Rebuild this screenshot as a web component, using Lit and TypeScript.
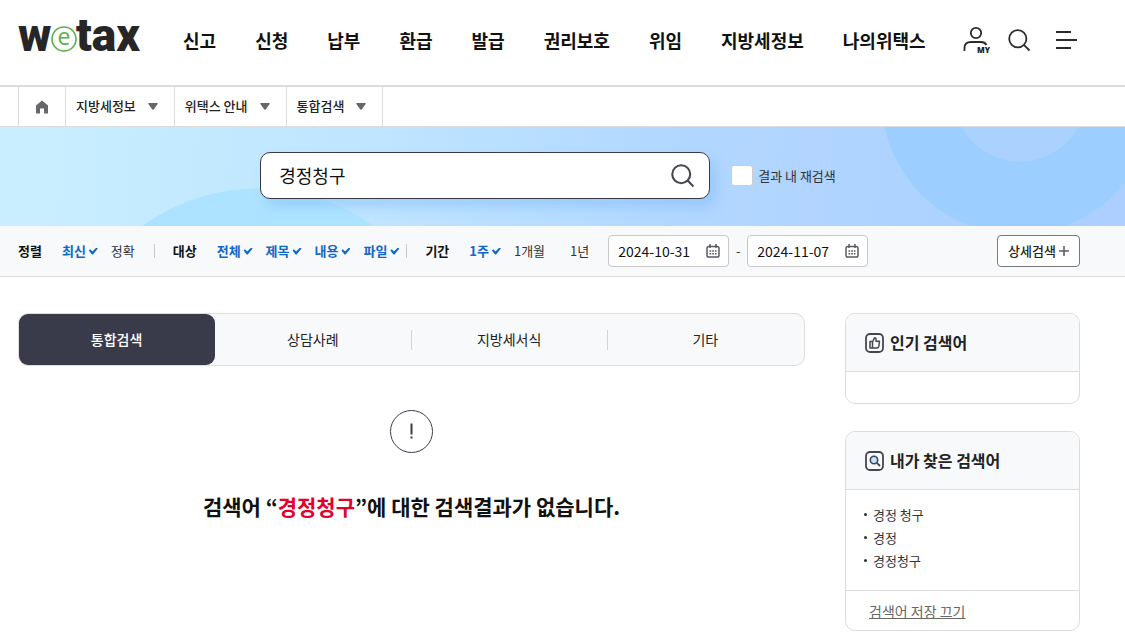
import { LitElement, html, css, svg } from "lit";
import { customElement, property, state } from "lit/decorators.js";
import { classMap } from "lit/directives/class-map.js";

const magnifier = svg`<circle cx="9.8" cy="9.8" r="8.6" /><path d="M15.9 15.9 L21.5 21.5" />`;

@customElement("site-header")
class SiteHeader extends LitElement {
  static styles = css`
    :host { display: block; border-bottom: 2px solid #dcdcdc; }
    .bar { display: flex; align-items: center; height: 85px; padding: 0 48px 5px 18px; box-sizing: border-box; }
    .logo svg { display: block; }
    .word { font: 900 46px Roboto, sans-serif; fill: #262626; }
    .letter { font: 400 23px "Open Sans", sans-serif; fill: #5cb143; }
    nav { display: flex; gap: 39px; margin-left: 33px; padding-bottom: 1px; }
    a { color: #111; text-decoration: none; white-space: nowrap; }
    nav a { font-size: 18px; line-height: 26px; font-weight: 700; }
    .tools { display: flex; align-items: center; margin-left: auto; gap: 18px; }
    button { display: block; border: 0; padding: 0; background: none; color: #2b2b2b; cursor: pointer; }
    button svg { display: block; fill: none; stroke: currentColor; stroke-width: 1.8; }
    .my { font: 800 8px "Open Sans", sans-serif; fill: #222; stroke: none; }
    .menu { margin-left: 6px; }
  `;
  private items = ["신고", "신청", "납부", "환급", "발급", "권리보호", "위임", "지방세정보", "나의위택스"];
  render() {
    return html`<header class="bar">
      <a class="logo" href="#" aria-label="wetax">
        <svg width="132" height="64" viewBox="0 0 132 64">
          <text class="word" x="0" y="43">w</text>
          <text class="word" x="58" y="43">tax</text>
          <circle cx="46" cy="31" r="12" fill="#fff" stroke="#5cb143" stroke-width="1.6" />
          <text class="letter" x="46" y="37" text-anchor="middle">e</text>
        </svg>
      </a>
      <nav>${this.items.map((t) => html`<a href="#">${t}</a>`)}</nav>
      <div class="tools">
        <button aria-label="MY">
          <svg width="27" height="28" viewBox="0 0 27 28">
            <circle cx="13" cy="7" r="5.2" />
            <path d="M1.5 25 V22 Q1.5 16 8 16 H18 Q22 16 23.5 19" />
            <text class="my" x="14" y="27">MY</text>
          </svg>
        </button>
        <button aria-label="검색">
          <svg width="23" height="23" viewBox="0 0 23 23">${magnifier}</svg>
        </button>
        <button class="menu" aria-label="전체메뉴">
          <svg width="22" height="20" viewBox="0 0 22 20"><path d="M1 2 H16 M1 10 H22 M1 18 H16" /></svg>
        </button>
      </div>
    </header>`;
  }
}

@customElement("bread-crumb")
class BreadCrumb extends LitElement {
  static styles = css`
    :host { display: block; border-bottom: 1px solid #dcdcdc; padding-left: 18px; }
    nav { display: flex; height: 39px; }
    a, button { display: flex; align-items: center; border: 0 solid #dcdcdc; border-right-width: 1px; box-sizing: border-box; background: none; }
    a { width: 48px; border-left-width: 1px; justify-content: center; }
    button { padding: 0 16px 0 10px; gap: 12px; font: inherit; font-size: 13px; font-weight: 500; color: #222; white-space: nowrap; cursor: pointer; }
    span { padding-bottom: 2px; }
    svg { display: block; fill: #66666b; }
  `;
  render() {
    return html`<nav>
      <a href="#" aria-label="홈"><svg width="14" height="14" viewBox="0 0 14 14"><path d="M7 0.5 L13 5.5 V13.5 H9 V8.5 H5 V13.5 H1 V5.5 Z" /></svg></a>
      ${["지방세정보", "위택스 안내", "통합검색"].map(
        (t) => html`<button><span>${t}</span><svg width="10" height="7" viewBox="0 0 10 7"><path d="M1 0 H9 Q10.4 0 9.5 1.2 L5.7 6.4 Q5 7.2 4.3 6.4 L0.5 1.2 Q-0.4 0 1 0 Z" /></svg></button>`
      )}
    </nav>`;
  }
}

@customElement("search-banner")
class SearchBanner extends LitElement {
  static styles = css`
    :host {
      display: block;
      background:
        radial-gradient(circle at calc(100% - 105px) -32px, #abd1ff 66px, transparent 67px),
        radial-gradient(circle at calc(100% - 107px) -29px, #9ccfff 136px, transparent 137px),
        radial-gradient(circle at 258px 259px, #aee3ff 197px, transparent 198px),
        linear-gradient(95deg, #c9efff, #bfe5ff 33%, #b2d7ff 60%, #accfff);
    }
    form { display: flex; align-items: center; justify-content: center; height: 99px; padding: 0 47px 2px 18px; box-sizing: border-box; }
    .box { display: flex; align-items: center; width: 450px; height: 47px; box-sizing: border-box; padding: 0 14px 0 18px; border: 1px solid #3a3a46; border-radius: 10px; background: #fff; box-shadow: 6px 8px 12px rgba(110, 175, 250, 0.35); }
    .query { flex: 1; min-width: 0; border: 0; padding: 0 0 2px; outline: 0; background: none; font: inherit; font-size: 18px; color: #111; }
    button { border: 0; padding: 0; background: none; color: #46464f; cursor: pointer; }
    button svg { display: block; fill: none; stroke: currentColor; stroke-width: 2; }
    .again { display: flex; align-items: center; gap: 5px; margin-left: 21px; font-size: 13px; color: #333; white-space: nowrap; }
    .tick { appearance: none; width: 22px; height: 21px; margin: 0; border: 1px solid #ccc; border-radius: 3px; background: #fff; }
    .tick:checked { background: #0f67c9; }
  `;
  render() {
    return html`<form @submit=${(e: Event) => e.preventDefault()}>
      <div class="box">
        <input class="query" type="text" aria-label="검색어" .value=${"경정청구"} />
        <button aria-label="검색"><svg width="24" height="24" viewBox="0 0 23 23">${magnifier}</svg></button>
      </div>
      <label class="again"><input class="tick" type="checkbox" />결과 내 재검색</label>
    </form>`;
  }
}

@customElement("filter-bar")
class FilterBar extends LitElement {
  static styles = css`
    :host { display: block; background: #f7f9fb; border-bottom: 1px solid #dcdcdc; }
    .bar { display: flex; align-items: center; min-height: 50px; padding: 0 45px 0 18px; font-size: 13px; line-height: 20px; color: #333; white-space: nowrap; }
    fieldset { display: contents; }
    .name { margin-right: 20px; font-weight: 700; color: #111; }
    .options { display: flex; gap: 13px; padding-right: 7px; }
    .split { width: 1px; height: 14px; margin-right: 18px; background: #c8c8c8; }
    .option { display: flex; align-items: center; }
    .option input { appearance: none; width: 9px; height: 7px; margin: 0 0 0 3px; }
    .option input:checked { background: #0f67c9; clip-path: polygon(0 44%, 15% 26%, 40% 58%, 84% 0, 100% 16%, 46% 100%, 34% 100%); }
    .option.on { font-weight: 700; color: #0f67c9; }
    .date { display: flex; align-items: center; width: 121px; height: 32px; box-sizing: border-box; padding: 0 8px 0 9px; border: 1px solid #c8c8c8; border-radius: 4px; background: #fff; }
    .date input { flex: 1; min-width: 0; width: 0; border: 0; padding: 0; outline: 0; background: none; font: inherit; font-size: 14px; color: #111; }
    button { font: inherit; cursor: pointer; }
    .pick { border: 0; padding: 0; background: none; }
    svg { display: block; fill: none; stroke: #5a5a62; stroke-width: 1.5; }
    .dash { width: 18px; text-align: center; }
    .more { display: flex; align-items: center; justify-content: center; gap: 3px; margin-left: auto; width: 83px; height: 32px; padding: 0; box-sizing: border-box; border: 1px solid #77777c; border-radius: 4px; background: #fff; font-weight: 500; color: #222; }
  `;
  @state() private picked = new Set(["최신", "전체", "제목", "내용", "파일", "1주"]);
  private toggle(kind: string, t: string, all: string[]) {
    const next = new Set(this.picked);
    if (kind === "radio") all.forEach((o) => next.delete(o));
    if (next.has(t)) next.delete(t);
    else next.add(t);
    this.picked = next;
  }
  private group(name: string, kind: string, options: string[]) {
    return html`<fieldset aria-label=${name}>
      <span class="name">${name}</span>
      <div class="options">
        ${options.map(
          (t) => html`<label class=${classMap({ option: true, on: this.picked.has(t) })}>${t}<input
            type=${kind} name=${name} .checked=${this.picked.has(t)} @change=${() => this.toggle(kind, t, options)} /></label>`
        )}
      </div>
    </fieldset>`;
  }
  private date(label: string, value: string) {
    return html`<div class="date">
      <input type="text" aria-label=${label} .value=${value} />
      <button class="pick" aria-label="달력">
        <svg width="14" height="14" viewBox="0 0 14 14"><rect x="1" y="2.5" width="12" height="10.5" rx="1.8" /><path d="M4 0 V4 M10 0 V4" /><path d="M3.5 7 H10.5 M3.5 9.8 H10.5" stroke-dasharray="1.7 1" /></svg>
      </button>
    </div>`;
  }
  render() {
    return html`<div class="bar">
      ${this.group("정렬", "radio", ["최신", "정확"])}
      <span class="split"></span>
      ${this.group("대상", "checkbox", ["전체", "제목", "내용", "파일"])}
      <span class="split"></span>
      ${this.group("기간", "radio", ["1주", "1개월", "1년"])}
      ${this.date("시작일", "2024-10-31")}
      <span class="dash">-</span>
      ${this.date("종료일", "2024-11-07")}
      <button class="more">상세검색<svg width="10" height="10" viewBox="0 0 10 10"><path d="M5 0 V10 M0 5 H10" /></svg></button>
    </div>`;
  }
}

@customElement("result-panel")
class ResultPanel extends LitElement {
  static styles = css`
    :host { display: block; }
    .tabs { display: grid; grid-template-columns: repeat(4, 1fr); border: 1px solid #dcdcdc; border-radius: 10px; background: #f7f9fb; }
    .tab { display: flex; align-items: center; height: 51px; padding: 0; border: 0; background: none; font: inherit; font-size: 14px; color: #222; cursor: pointer; }
    .tab span { flex: 1; line-height: 18px; padding-bottom: 2px; border-right: 1px solid transparent; }
    .tab.ruled span { border-right-color: #d4d4d4; }
    .tab.on { border-radius: 9px; background: #3a3b4a; color: #fff; font-weight: 500; }
    .empty { display: flex; flex-direction: column; align-items: center; padding-top: 44px; }
    .empty svg { display: block; fill: none; stroke: #3a3b4a; }
    p { margin: 37px 0 0; font-size: 21px; line-height: 32px; font-weight: 700; color: #111; text-align: center; }
    em { font-style: normal; color: #e4002b; }
  `;
  @state() private current = 0;
  render() {
    const tabs = ["통합검색", "상담사례", "지방세서식", "기타"];
    return html`<div class="tabs" role="tablist">
        ${tabs.map(
          (t, i) => html`<button role="tab" aria-selected=${i === this.current}
            class=${classMap({ tab: true, on: i === this.current, ruled: i > 0 && i < tabs.length - 1 })}
            @click=${() => (this.current = i)}><span>${t}</span></button>`
        )}
      </div>
      <div class="empty">
        <svg width="43" height="43" viewBox="0 0 43 43"><circle cx="21.5" cy="21.5" r="21" /><path d="M21.5 13.5 V24.5 M21.5 26.5 V28.5" stroke-width="2" /></svg>
        <p>검색어 “<em>경정청구</em>”에 대한 검색결과가 없습니다.</p>
      </div>`;
  }
}

@customElement("side-card")
class SideCard extends LitElement {
  static styles = css`
    :host { display: block; border: 1px solid #dcdcdc; border-radius: 10px; overflow: hidden; background: #fff; }
    h2 { display: flex; align-items: center; gap: 6px; height: 57px; margin: 0; padding-left: 19px; border-bottom: 1px solid #dcdcdc; background: #f7f9fb; font-size: 16px; font-weight: 700; color: #222; }
    span { padding-bottom: 2px; }
    svg { display: block; fill: none; stroke: #46464f; stroke-width: 1.8; stroke-linejoin: round; }
    .body { min-height: 31px; }
  `;
  @property() heading = "";
  @property() icon = "";
  render() {
    return html`<h2>
        <svg width="19" height="20" viewBox="0 0 19 20">
          <rect x="1" y="1" width="17" height="18" rx="4" />
          ${this.icon === "thumb"
            ? svg`<path stroke-width="1.5" d="M5 8.5 H7.5 V15 H5 Z M7.5 9 L9.5 4.8 Q11.5 4.8 11 8.2 H14.5 L13.8 13.4 Q13.5 15 12 15 H7.5" />`
            : svg`<circle cx="9" cy="9" r="3.7" fill="#bfe6ff" stroke-width="1.6" /><path d="M11.8 11.8 L15 15" />`}
        </svg><span>${this.heading}</span></h2>
      <div class="body"><slot></slot></div>`;
  }
}

@customElement("app-root")
class AppRoot extends LitElement {
  static styles = css`
    :host { display: block; background: #fff; color: #222; font-family: "Noto Sans CJK KR", "Noto Sans", sans-serif; }
    main { display: flex; align-items: flex-start; gap: 40px; padding: 36px 45px 4px 18px; }
    result-panel { flex: 1; min-width: 0; }
    aside { display: flex; flex-direction: column; gap: 27px; width: 235px; }
    ul { margin: 0; padding: 13px 18px 18px; list-style: none; font-size: 13px; line-height: 23px; color: #333; }
    li { display: flex; align-items: center; gap: 6px; }
    li::before { content: ""; width: 3px; height: 3px; border-radius: 50%; background: #333; }
    .foot { padding: 9px 23px 8px; border-top: 1px solid #dcdcdc; font-size: 14px; line-height: 22px; }
    .foot a { color: #666; text-decoration: underline; }
  `;
  render() {
    return html`<site-header></site-header>
      <bread-crumb></bread-crumb>
      <search-banner></search-banner>
      <filter-bar></filter-bar>
      <main>
        <result-panel></result-panel>
        <aside>
          <side-card heading="인기 검색어" icon="thumb"></side-card>
          <side-card heading="내가 찾은 검색어" icon="search">
            <ul>${["경정 청구", "경정", "경정청구"].map((t) => html`<li>${t}</li>`)}</ul>
            <div class="foot"><a href="#">검색어 저장 끄기</a></div>
          </side-card>
        </aside>
      </main>`;
  }
}
